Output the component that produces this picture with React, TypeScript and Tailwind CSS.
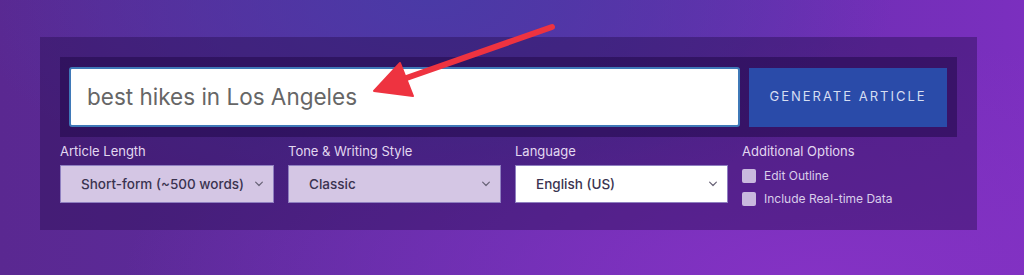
import React from "react";

const Chevron = ({ className = "" }: { className?: string }) => (
  <svg viewBox="0 0 12 8" className={className} fill="none" stroke="currentColor" strokeWidth="1.6" strokeLinecap="round" strokeLinejoin="round">
    <path d="M1.5 1.5 6 6l4.5-4.5" />
  </svg>
);

const Select = ({ value, light }: { value: string; light?: boolean }) => (
  <div
    className={
      "flex h-[38px] items-center justify-between whitespace-nowrap border border-[#8f7fc0] pl-[20px] pr-[9px] text-[13.5px] font-medium text-[#3a3350] " +
      (light ? "bg-white" : "bg-[#d4c6e4]")
    }
  >
    <span>{value}</span>
    <Chevron className="h-[6px] w-[10px] text-[#6a6478]" />
  </div>
);

const Check = ({ label }: { label: string }) => (
  <label className="flex h-[14px] items-center gap-[8px] text-[12px] text-[#d9cdea]">
    <span className="h-[14px] w-[14px] rounded-[2px] bg-[#c9b9de]" />
    {label}
  </label>
);

export default function App() {
  return (
    <div
      className="relative h-[275px] w-[1024px] overflow-hidden bg-[radial-gradient(ellipse_at_42%_0%,#4a3aa6_0%,transparent_55%),radial-gradient(ellipse_at_80%_100%,#8432c4_0%,transparent_60%),linear-gradient(90deg,#5a2891,#5f2ea6_50%,#7b2fbf)] pt-[37px] pl-[40px]"
      style={{ fontFamily: "Inter, 'Open Sans', sans-serif" }}
    >
      <div className="h-[193px] w-[937px] bg-[#2a0f55]/45 px-[20px] pt-[20px]">
        <div className="flex h-[80px] items-center gap-[9px] bg-[#23094a]/55 px-[9px]">
          <div className="flex h-[60px] w-[671px] items-center rounded-[3px] border-2 border-[#3f79b8] bg-white pl-[16px] text-[22.5px] text-[#666]">
            best hikes in Los Angeles
          </div>
          <button className="h-[59px] w-[198px] bg-[#2a4ba9] text-[13px] tracking-[2px] text-[#d6def2]">
            GENERATE ARTICLE
          </button>
        </div>
        <div className="mt-[5px] grid grid-cols-[214px_213px_213px_1fr] gap-x-[14px]">
          <div>
            <div className="mb-[4px] text-[13px] leading-[19px] text-[#e2d8f0]">Article Length</div>
            <Select value="Short-form (~500 words)" />
          </div>
          <div>
            <div className="mb-[4px] text-[13px] leading-[19px] text-[#e2d8f0]">Tone &amp; Writing Style</div>
            <Select value="Classic" />
          </div>
          <div>
            <div className="mb-[4px] text-[13px] leading-[19px] text-[#e2d8f0]">Language</div>
            <Select value="English (US)" light />
          </div>
          <div>
            <div className="mb-[8px] text-[13px] leading-[19px] text-[#e2d8f0]">Additional Options</div>
            <div className="flex flex-col gap-[9px]">
              <Check label="Edit Outline" />
              <Check label="Include Real-time Data" />
            </div>
          </div>
        </div>
      </div>
      <svg className="absolute left-0 top-0" width="1024" height="275" viewBox="0 0 1024 275">
        <line x1="552" y1="27" x2="395" y2="82" stroke="#ee3340" strokeWidth="6" strokeLinecap="round" />
        <path d="M374 91 400 63 413 96Z" fill="#ee3340" stroke="#ee3340" strokeWidth="2" strokeLinejoin="round" />
      </svg>
    </div>
  );
}
